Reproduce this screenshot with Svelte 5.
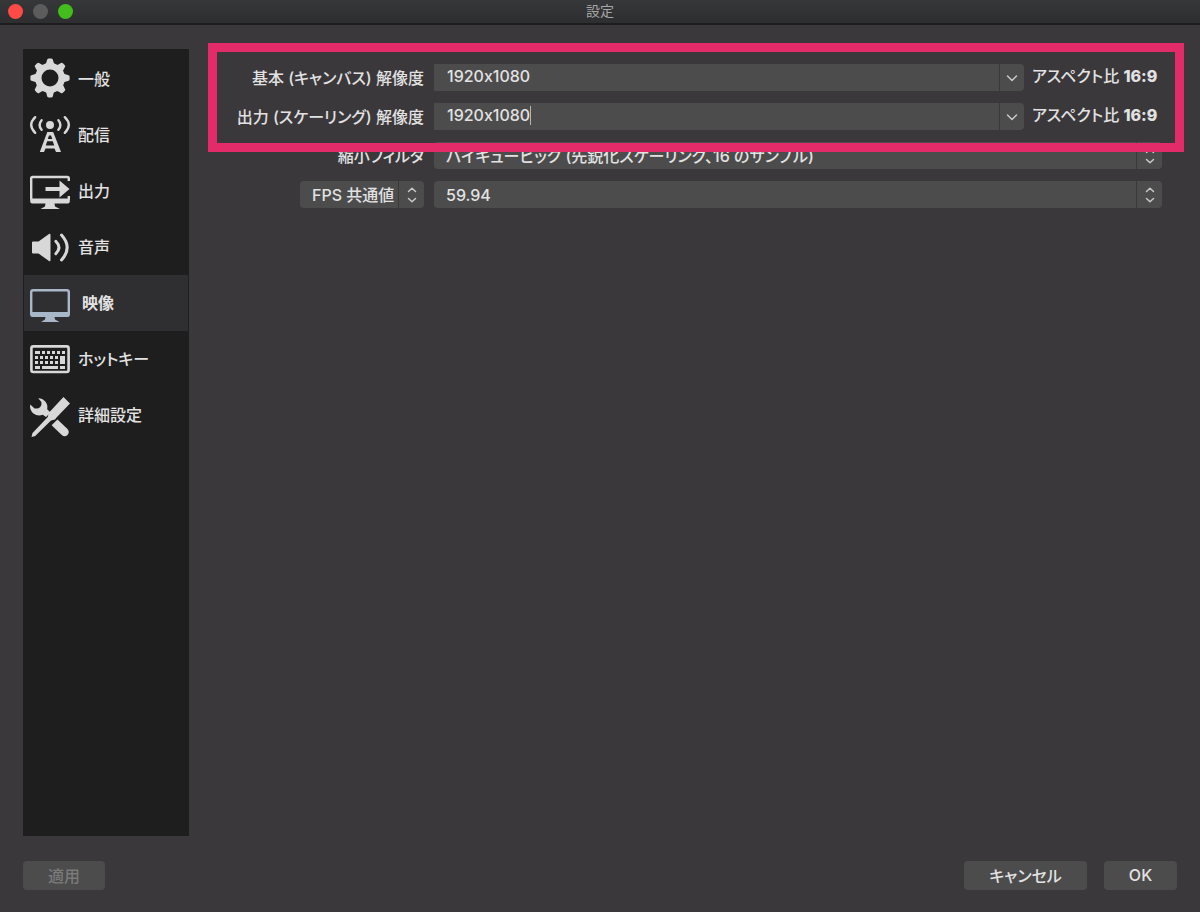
<script lang="ts">
	const sections = [
		{ id: 'general', label: '一般' },
		{ id: 'stream', label: '配信' },
		{ id: 'output', label: '出力' },
		{ id: 'audio', label: '音声' },
		{ id: 'video', label: '映像' },
		{ id: 'hotkeys', label: 'ホットキー' },
		{ id: 'advanced', label: '詳細設定' }
	];

	const teeth = [0, 45, 90, 135, 180, 225, 270, 315];
	const keys = [
		[12, 12], [17, 12], [22, 12], [27, 12], [32, 12],
		[5, 17], [10, 17], [15, 17], [20, 17], [25, 17],
		[5, 22], [10, 22], [15, 22], [20, 22], [25, 22]
	];

	let active = $state('video');
	let base = $state('1920x1080');
	let output = $state('1920x1080');
</script>

{#snippet icon(id: string)}
	<svg class="icon" viewBox="0 0 40 40" aria-hidden="true">
		{#if id === 'general'}
			<circle cx="20" cy="19" r="11.7" fill="none" stroke="currentColor" stroke-width="6.4" />
			{#each teeth as angle}
				<path d="M13.8 7Q16.6 4.8 17 1.2Q17.2-.6 18.6-.6H21.4Q22.8-.6 23 1.2Q23.4 4.8 26.2 7Z" transform="rotate({angle} 20 19)" />
			{/each}
		{:else if id === 'stream'}
			<circle cx="20" cy="10" r="4" />
			<g fill="none" stroke="currentColor" stroke-width="2.4" stroke-linecap="round">
				<path d="M11.6 5.2Q7.6 10 11.6 14.8M28.4 5.2Q32.4 10 28.4 14.8" />
				<path d="M5.2 2.2Q-2.8 10 5.2 17.8M34.8 2.2Q42.8 10 34.8 17.8" />
			</g>
			<path fill-rule="evenodd" d="M17.3 17H23.2L31 37H26L24.5 33.5H15.5L14 37H9.8ZM19 20.5L17.8 24H22.3L21 20.5ZM17.2 26.2L15.8 30.6H24.2L22.8 26.2Z" />
		{:else if id === 'output'}
			<path d="M38.8 10V7.5Q38.8 6 37.3 6H2.7Q1.2 6 1.2 7.5V28M38.8 25V29" fill="none" stroke="currentColor" stroke-width="2.4" />
			<path d="M.2 27.5H39.8V30.5Q39.8 32.5 37.8 32.5H2.2Q.2 32.5 .2 30.5ZM15.5 32.5H24.5L25 35.5L30 38H10.5L15 35.5Z" />
			<path d="M15.5 16H29.5V9.5L39.5 18L29.5 26.5V20H15.5Z" />
		{:else if id === 'audio'}
			<path d="M3 14.5H8.5L19 7Q20.5 6.3 20.5 8V33Q20.5 34.7 19 34L8.5 26.5H3Q2 26.5 2 25.5V15.5Q2 14.5 3 14.5Z" />
			<g fill="none" stroke="currentColor" stroke-width="3" stroke-linecap="round">
				<path d="M25.8 14.3Q32 20.5 25.8 26.7" />
				<path d="M31.5 8Q42.8 20.5 31.5 33" />
			</g>
		{:else if id === 'video'}
			<rect x="1.2" y="7.2" width="37.6" height="25" rx="2" fill="none" stroke="currentColor" stroke-width="2.4" />
			<path d="M.2 29H39.8V31.5Q39.8 34 37.8 34H2.2Q.2 34 .2 31.5ZM15.5 34H24.5L25 36.5L29.5 39H11L15 36.5Z" />
		{:else if id === 'hotkeys'}
			<rect x="1.4" y="7.4" width="37.2" height="25.6" rx="2" fill="none" stroke="currentColor" stroke-width="2.6" />
			<path d="M5 12H10V15H5ZM30 17H35V25H30ZM5 27H10V30H5ZM12 27H28V30H12ZM30 27H35V30H30Z" />
			{#each keys as [x, y]}
				<rect {x} {y} width="3" height="3" />
			{/each}
		{:else}
			<path d="M8.2 3.2A9.2 9.2 0 0 1 17.2 14.2L20.5 17.5L16 22L12.8 19.8A9.2 9.2 0 0 1 .2 9.6L4.6 13.4Q8.5 14.2 10.2 12Q12 9.600 11.4 7Z" />
			<path d="M27.5 24.4L37.5 34Q40 37 37.5 40Q34.8 42.500 31.800 40L21.6 30.2Z" />
			<path d="M33.5 2L40 8.4L26.500 22.4L25 24.6L21 25.4L5.200 41L1.5 42L2.5 38L17.8 22L18.600 18Z" />
		{/if}
	</svg>
{/snippet}

{#snippet chevron()}
	<svg class="chevron" viewBox="0 0 12 16" aria-hidden="true"><path d="M1.5 6L6 10.5L10.5 6" /></svg>
{/snippet}

{#snippet updown()}
	<span class="updown">
		<svg class="chevron" viewBox="0 0 12 16" aria-hidden="true"><path d="M2.5 4.5L6 1.2L9.5 4.5M2.5 11.5L6 14.8L9.5 11.5" /></svg>
	</span>
{/snippet}

<div class="window">
	<header class="titlebar">
		<div class="lights">
			<button class="light close" aria-label="閉じる"></button>
			<button class="light minimize" aria-label="しまう" disabled></button>
			<button class="light zoom" aria-label="拡大"></button>
		</div>
		<h1>設定</h1>
	</header>

	<div class="content">
		<nav class="sidebar">
			{#each sections as section}
				<a
					href="#{section.id}"
					class:active={active === section.id}
					onclick={() => (active = section.id)}
				>
					{@render icon(section.id)}
					<span>{section.label}</span>
				</a>
			{/each}
		</nav>

		<main class="form">
			<div class="group">
				<div class="row">
					<label for="base">基本 (キャンバス) 解像度</label>
					<div class="field">
						<div class="combo">
							<input id="base" bind:value={base} />
							<button aria-label="基本解像度の一覧">{@render chevron()}</button>
						</div>
						<span class="aspect">アスペクト比 <b>16:9</b></span>
					</div>
				</div>
				<div class="row">
					<label for="output">出力 (スケーリング) 解像度</label>
					<div class="field">
						<div class="combo">
							<input id="output" bind:value={output} />
							<span class="caret"></span>
							<button aria-label="出力解像度の一覧">{@render chevron()}</button>
						</div>
						<span class="aspect">アスペクト比 <b>16:9</b></span>
					</div>
				</div>
			</div>
			<div class="row">
				<label for="filter">縮小フィルタ</label>
				<div class="select">
					<select id="filter">
						<option>バイキュービック (先鋭化スケーリング、16 のサンプル)</option>
					</select>
					{@render updown()}
				</div>
			</div>
			<div class="row">
				<div class="select fps-type">
					<select aria-label="FPS の種類">
						<option>FPS 共通値</option>
					</select>
					{@render updown()}
				</div>
				<div class="select">
					<select aria-label="FPS">
						<option>59.94</option>
					</select>
					{@render updown()}
				</div>
			</div>
		</main>
	</div>

	<footer class="footer">
		<button class="btn apply" disabled>適用</button>
		<button class="btn cancel">キャンセル</button>
		<button class="btn ok">OK</button>
	</footer>
</div>

<style>
	:global(body) {
		margin: 0;
		background: #3b383b;
	}

	.window {
		box-sizing: border-box;
		display: flex;
		flex-direction: column;
		min-height: 100vh;
		background: #3b383b;
		color: #e2e2e2;
		font-family: Inter, 'Noto Sans CJK JP', sans-serif;
		font-size: 16px;
		font-weight: 500;
		font-feature-settings: 'palt', 'calt' 0;
	}

	button,
	input,
	select {
		box-sizing: border-box;
		margin: 0;
		border: 0;
		color: inherit;
		font: inherit;
		font-feature-settings: inherit;
	}

	.titlebar {
		display: grid;
		grid-template-columns: 1fr auto 1fr;
		align-items: center;
		height: 23px;
		border-bottom: 2px solid #1d1d1e;
		background: linear-gradient(#363739, #2d2e30);
	}

	.lights {
		display: flex;
		gap: 10px;
		padding-left: 8px;
	}

	.light {
		width: 15px;
		height: 15px;
		padding: 0;
		border-radius: 50%;
	}

	.close {
		background: #ff4b47;
	}

	.minimize {
		background: #5c5c5d;
	}

	.zoom {
		background: #43bd1d;
	}

	h1 {
		margin: 0;
		padding-bottom: 2px;
		color: #a6a6a7;
		font-size: 14px;
		font-weight: 400;
		line-height: 20px;
	}

	.content {
		display: flex;
		flex: 1;
		gap: 36px;
		padding: 24px 38px 25px 23px;
	}

	.sidebar {
		box-sizing: border-box;
		flex: none;
		width: 166px;
		padding: 2px 1px;
		background: #1e1e1e;
	}

	.sidebar a {
		display: flex;
		align-items: center;
		gap: 8px;
		height: 56px;
		padding-left: 6px;
		color: inherit;
		text-decoration: none;
	}

	.sidebar span {
		padding-bottom: 2px;
	}

	.sidebar a.active {
		gap: 12px;
		background: #2f2f31;
		font-weight: 700;
	}

	.icon {
		flex: none;
		width: 40px;
		height: 40px;
		overflow: visible;
		color: #d8d8d8;
		fill: currentColor;
	}

	.active .icon {
		color: #a9b8c8;
	}

	.form {
		display: flex;
		flex: 1;
		flex-direction: column;
		gap: 12px;
		min-width: 0;
		padding-top: 15px;
	}

	.group {
		position: relative;
		display: flex;
		flex-direction: column;
		gap: 12px;
	}

	.group::after {
		content: '';
		position: absolute;
		z-index: 1;
		inset: -21px -22px -22px -17px;
		border: 9px solid #e42b6a;
		pointer-events: none;
	}

	.row {
		display: grid;
		grid-template-columns: 199px 1fr;
		gap: 10px;
		align-items: center;
		height: 27px;
	}

	label {
		padding-bottom: 2px;
		text-align: right;
		white-space: nowrap;
	}

	.field {
		display: flex;
		gap: 8px;
	}

	.combo,
	.select {
		position: relative;
		display: flex;
		height: 27px;
		min-width: 0;
	}

	.combo {
		flex: 1;
	}

	.combo input {
		flex: 1;
		min-width: 0;
		padding: 0 13px 3px;
		background: #4c4c4c;
		outline: none;
	}

	.combo button {
		display: grid;
		place-items: center;
		width: 25px;
		padding: 0;
		border-left: 1px solid #393939;
		border-radius: 0 4px 4px 0;
		background: #4c4c4c;
	}

	.caret {
		position: absolute;
		top: 3px;
		left: 96px;
		width: 1px;
		height: 19px;
		background: #b4b4b4;
	}

	.aspect {
		flex: none;
		width: 130px;
		line-height: 24px;
		white-space: nowrap;
	}

	.aspect b {
		font-weight: 800;
	}

	.select select {
		appearance: none;
		width: 100%;
		padding: 0 26px 0 12px;
		border-radius: 4px;
		background: #4c4c4c;
		outline: none;
	}

	.fps-type {
		justify-self: end;
		width: 124px;
	}

	.updown {
		position: absolute;
		top: 0;
		right: 0;
		bottom: 0;
		display: grid;
		place-items: center;
		width: 25px;
		border-left: 1px solid #393939;
		pointer-events: none;
	}

	.chevron {
		width: 12px;
		height: 16px;
		fill: none;
		stroke: #c8c8c8;
		stroke-width: 1.5;
		stroke-linecap: round;
		stroke-linejoin: round;
	}

	.footer {
		display: flex;
		gap: 17px;
		padding: 0 23px 22px;
	}

	.btn {
		height: 29px;
		padding: 0 24px 2px;
		border-radius: 4px;
		background: #4c4c4c;
	}

	.apply {
		min-width: 82px;
		margin-right: auto;
		color: #7a7a7a;
	}

	.cancel {
		min-width: 123px;
	}

	.ok {
		min-width: 73px;
	}
</style>
